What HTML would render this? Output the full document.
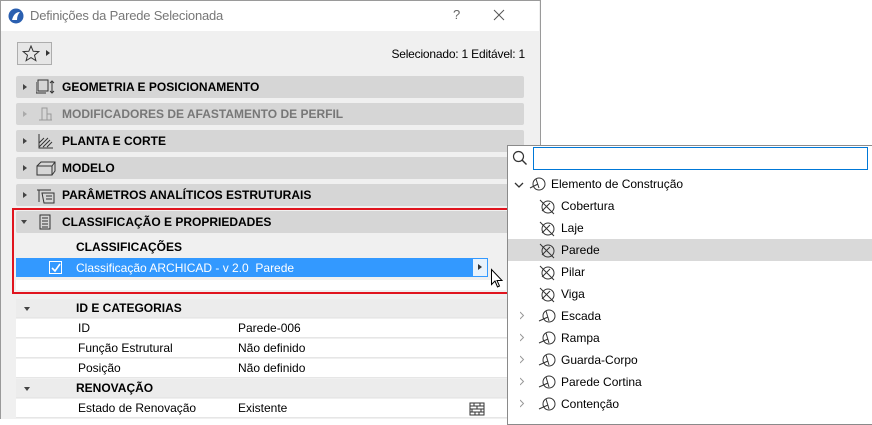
<!DOCTYPE html>
<html><head><meta charset="utf-8"><style>
*{box-sizing:border-box;margin:0;padding:0}
body{width:872px;height:419px;overflow:hidden;background:#fff;font-family:"Liberation Sans",sans-serif;font-size:12px;color:#000;position:relative}
.abs{position:absolute}
.dlg{left:0;top:0;width:541px;height:419px;background:#f0f0f0;border:1px solid #9a9a9a;border-bottom:none}
.title{left:1px;top:1px;width:538px;height:30px;background:#fff}
.bar{left:16px;width:508px;height:22px;background:#d6d6d6;border-radius:2px;font-weight:bold;font-size:12px;line-height:22px}
.bar .t{position:absolute;left:46px}
.bar .ar{position:absolute;left:7px;top:8px;width:0;height:0;border-left:4px solid #444;border-top:3.5px solid transparent;border-bottom:3.5px solid transparent}
.bar .ic{position:absolute;left:20px;top:3px}
.row{left:16px;width:508px;height:19px;background:#fff;border-bottom:1px solid #e6e6e6;line-height:19px}
.pop{left:507px;top:145px;width:366px;height:280px;background:#fff;border:1px solid #8a8a8a}
.ti{position:absolute;height:22px;line-height:22px;font-size:12px}
</style></head><body>
<div class="abs dlg"></div>
<div class="abs title"></div>
<svg class="abs" style="left:8px;top:8px" width="16" height="16"><circle cx="8" cy="8" r="7.5" fill="#2a5fb0"/><path d="M4 12 Q6 4 12 4 Q9 7 9 12" fill="#fff"/></svg>
<div class="abs" style="left:30px;top:8px;color:#777;font-size:13px;letter-spacing:-0.2px">Definições da Parede Selecionada</div>
<div class="abs" style="left:453px;top:7px;color:#666;font-size:13px">?</div>
<svg class="abs" style="left:493px;top:9px" width="12" height="12"><path d="M1 1L11 11M11 1L1 11" stroke="#555" stroke-width="1"/></svg>
<div class="abs" style="left:17px;top:42px;width:35px;height:23px;border:1px solid #adadad;background:#e6e6e6"></div>
<svg class="abs" style="left:22px;top:45px" width="18" height="17"><path d="M9 1L11.2 6.3 16.8 6.6 12.5 10.2 13.9 15.7 9 12.6 4.1 15.7 5.5 10.2 1.2 6.6 6.8 6.3Z" fill="none" stroke="#333"/></svg>
<div class="abs" style="left:46px;top:50px;border-left:4px solid #333;border-top:3.5px solid transparent;border-bottom:3.5px solid transparent"></div>
<div class="abs" style="left:384px;top:47px;font-size:12px;width:141px;text-align:right;letter-spacing:-0.2px">Selecionado: 1 Editável: 1</div>

<div class="abs bar" style="top:76px"><span class="ar"></span><svg class="ic" width="22" height="16"><rect x="2" y="1" width="10" height="11" fill="none" stroke="#333"/><path d="M0 3v11h10M16 2v12M14 4l2-2 2 2M14 12l2 2 2-2" fill="none" stroke="#333"/></svg><span class="t">GEOMETRIA E POSICIONAMENTO</span></div>
<div class="abs bar" style="top:103px;color:#777"><span class="ar" style="border-left-color:#aaa"></span><svg class="ic" width="20" height="16"><path d="M6 2h5v12h-5zM3 14h13M11 8h4v6" fill="none" stroke="#999"/></svg><span class="t">MODIFICADORES DE AFASTAMENTO DE PERFIL</span></div>
<div class="abs bar" style="top:130px"><span class="ar"></span><svg class="ic" width="20" height="16"><path d="M3 1v14h14M3 10l5-5M3 14l9-9M7 14l7-7M11 14l5-5" fill="none" stroke="#333"/></svg><span class="t">PLANTA E CORTE</span></div>
<div class="abs bar" style="top:157px"><span class="ar"></span><svg class="ic" width="20" height="16"><path d="M1 6h15v9H1zM1 6l4-4h14v9l-3 4M16 6l3-4" fill="none" stroke="#333"/></svg><span class="t">MODELO</span></div>
<div class="abs bar" style="top:184px"><span class="ar"></span><svg class="ic" width="20" height="17"><path d="M1 3h14M3 3v12M6 6h12v10H8zM10 9h6M10 12h6" fill="none" stroke="#333"/></svg><span class="t">PARÂMETROS ANALÍTICOS ESTRUTURAIS</span></div>
<div class="abs bar" style="top:211px"><span class="abs" style="left:5px;top:9px;border-top:4px solid #444;border-left:3.5px solid transparent;border-right:3.5px solid transparent"></span><svg class="ic" width="20" height="16"><path d="M4 1h10v14H4zM6 4h6M6 7h6M6 10h6M6 13h6" fill="none" stroke="#333"/></svg><span class="t">CLASSIFICAÇÃO E PROPRIEDADES</span></div>
<div class="abs" style="left:76px;top:240px;font-weight:bold">CLASSIFICAÇÕES</div>
<div class="abs" style="left:16px;top:258px;width:456px;height:19px;background:#3399ff"></div>
<div class="abs" style="left:49px;top:261px;width:13px;height:13px;border:1.5px solid #fff"></div>
<svg class="abs" style="left:50px;top:262px" width="12" height="12"><path d="M2 6l3 3 5-7" stroke="#fff" stroke-width="1.6" fill="none"/></svg>
<div class="abs" style="left:76px;top:261px;color:#fff">Classificação ARCHICAD - v 2.0&nbsp; Parede</div>
<div class="abs" style="left:472px;top:258px;width:16px;height:19px;border:1px solid #3399ff;background:#e8f2fc"></div>
<div class="abs" style="left:478px;top:264px;border-left:4px solid #333;border-top:3.5px solid transparent;border-bottom:3.5px solid transparent"></div>
<div class="abs" style="left:16px;top:280px;width:490px;height:10px;background:#fff"></div>
<div class="abs" style="left:12px;top:208px;width:497px;height:86px;border:2px solid #e0141e"></div>
<svg class="abs" style="left:490px;top:268px" width="14" height="22"><path d="M1.5 1.5v15l3.5-3.5 2.5 6 2-1-2.5-5.5h5z" fill="#fff" stroke="#000"/></svg>

<div class="abs row" style="top:299px;background:#ececec;font-weight:bold"><span class="abs" style="left:8px;top:8px;border-top:4px solid #444;border-left:3.5px solid transparent;border-right:3.5px solid transparent"></span><span class="abs" style="left:60px">ID E CATEGORIAS</span></div>
<div class="abs row" style="top:319px"><span class="abs" style="left:62px">ID</span><span class="abs" style="left:222px">Parede-006</span></div>
<div class="abs row" style="top:339px"><span class="abs" style="left:62px">Função Estrutural</span><span class="abs" style="left:222px">Não definido</span></div>
<div class="abs row" style="top:359px"><span class="abs" style="left:62px">Posição</span><span class="abs" style="left:222px">Não definido</span></div>
<div class="abs row" style="top:379px;background:#ececec;font-weight:bold"><span class="abs" style="left:8px;top:8px;border-top:4px solid #444;border-left:3.5px solid transparent;border-right:3.5px solid transparent"></span><span class="abs" style="left:60px">RENOVAÇÃO</span></div>
<div class="abs row" style="top:399px"><span class="abs" style="left:62px">Estado de Renovação</span><span class="abs" style="left:222px">Existente</span></div>
<svg class="abs" style="left:469px;top:402px" width="16" height="14"><path d="M1 1h14v12H1zM1 4h14M1 7h14M1 10h14M5 1v3M11 1v3M8 4v3M3 7v3M12 7v3M6 10v3M10 10v3" fill="none" stroke="#333"/></svg>

<div class="abs pop"></div>
<svg class="abs" style="left:512px;top:150px" width="16" height="16"><circle cx="6.5" cy="6.5" r="5" fill="none" stroke="#333" stroke-width="1.2"/><path d="M10 10l4.5 4.5" stroke="#333" stroke-width="1.4"/></svg>
<div class="abs" style="left:533px;top:147px;width:335px;height:23px;border:1px solid #0078d7;background:#fff"></div>
<div class="abs" style="left:508px;top:239px;width:364px;height:22px;background:#d9d9d9"></div>
<svg class="abs" style="left:514px;top:181px" width="10" height="8"><path d="M1 2l4 4 4-4" stroke="#333" stroke-width="1.3" fill="none"/></svg>
<svg class="abs" style="left:529px;top:176px" width="18" height="16"><circle cx="10" cy="8" r="6" fill="none" stroke="#333"/><path d="M1 12l8-4M7 3l3 9" stroke="#333" fill="none"/></svg>
<div class="ti" style="left:551px;top:173px">Elemento de Construção</div>
<div class="ti" style="left:561px;top:195px">Cobertura</div>
<div class="ti" style="left:561px;top:217px">Laje</div>
<div class="ti" style="left:561px;top:239px">Parede</div>
<div class="ti" style="left:561px;top:261px">Pilar</div>
<div class="ti" style="left:561px;top:283px">Viga</div>
<div class="ti" style="left:561px;top:305px">Escada</div>
<div class="ti" style="left:561px;top:327px">Rampa</div>
<div class="ti" style="left:561px;top:349px">Guarda-Corpo</div>
<div class="ti" style="left:561px;top:371px">Parede Cortina</div>
<div class="ti" style="left:561px;top:393px">Contenção</div>
<svg class="abs" style="left:520px;top:195px" width="352" height="224">
<g fill="none" stroke="#333">
<g id="leaf"><circle cx="28" cy="12" r="6"/><path d="M20 5l14 14M22 16l8-8"/></g>
<use href="#leaf" y="22"/><use href="#leaf" y="44"/><use href="#leaf" y="66"/><use href="#leaf" y="88"/>
<g id="br"><circle cx="29" cy="121" r="6"/><path d="M19 126l9-4M26 116l3 10"/><path d="M0 117l3.5 3.5L0 124" stroke="#999"/></g>
<use href="#br" y="22"/><use href="#br" y="44"/><use href="#br" y="66"/><use href="#br" y="88"/>
</g></svg>
</body></html>
